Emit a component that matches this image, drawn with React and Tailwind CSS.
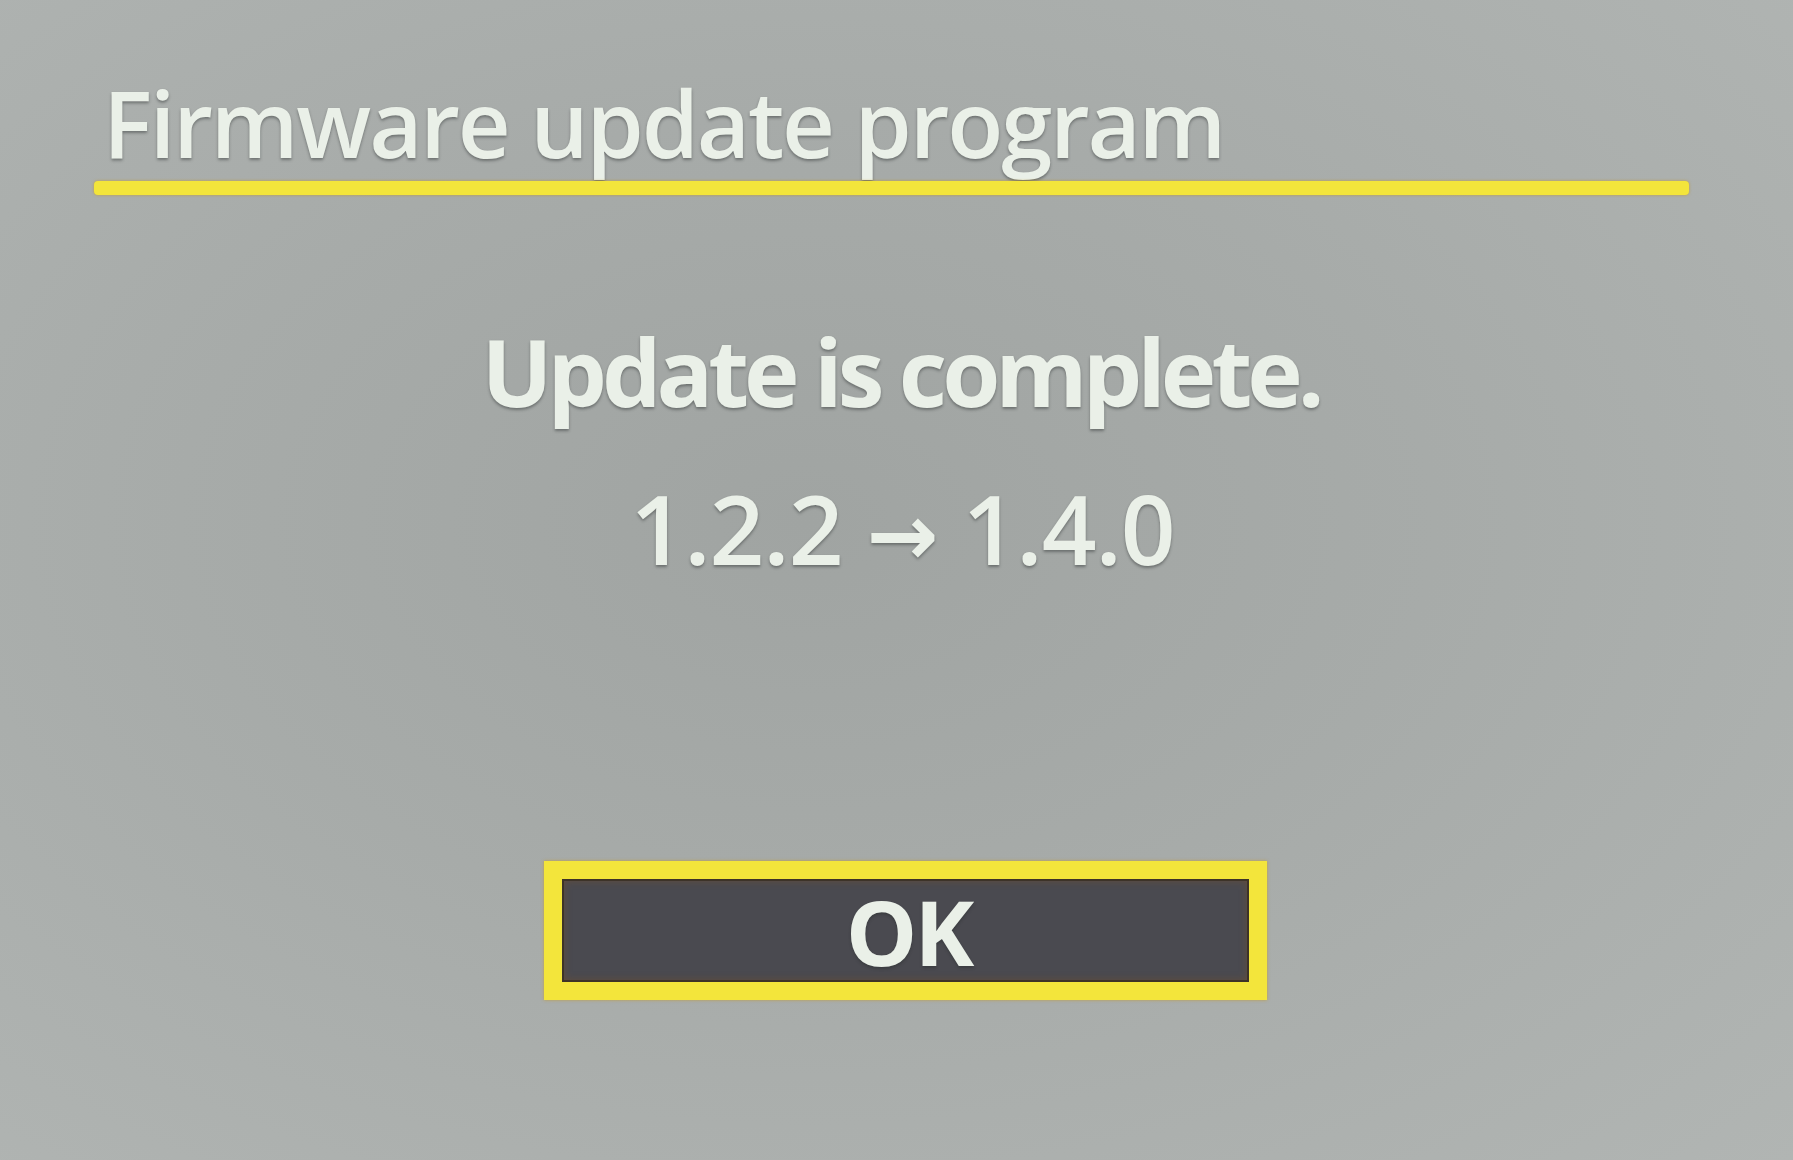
import React from 'react';

const glow = '[text-shadow:0_2px_3px_rgba(40,45,45,0.45)]';

const App = () => {
  return (
    <div className="w-full h-[1160px] overflow-hidden bg-[#a8acaa] bg-[radial-gradient(ellipse_at_45%_45%,#a0a4a2_0%,#a7aba9_45%,#b1b5b3_100%)] font-['Open_Sans',sans-serif] text-[#eaf0e8]">
      <div className="flex flex-col">
        <div className="pt-[77px] pl-[103px]">
          <h1 className={`text-[92px] leading-none font-semibold tracking-[-2.2px] ${glow}`}>
            Firmware update program
          </h1>
        </div>
        <div className="mt-[12px] ml-[94px] mr-[104px] h-[14px] rounded-[4px] bg-[#f3e53b] shadow-[0_0_3px_rgba(200,150,20,0.7)]"></div>

        <div className="mt-[129px] flex flex-col items-center">
          <p className={`ml-[8px] text-[94px] leading-none font-bold tracking-[-5px] ${glow}`}>Update is complete.</p>
          <p className={`mt-[62px] ml-[12px] text-[96px] leading-none font-semibold tracking-[-1px] ${glow}`}>
            1.2.2 <span className="font-['DejaVu_Sans',sans-serif] font-bold text-[86px] tracking-normal">→</span> 1.4.0
          </p>

          <button className="mt-[283px] ml-[18px] w-[723px] h-[139px] border-[18px] border-[#f3e53b] bg-[#4a4a50] shadow-[inset_0_0_0_2px_#3d3328,inset_0_0_10px_rgba(140,80,20,0.55),0_0_3px_rgba(200,150,20,0.7)] flex items-center justify-center">
            <span className={`ml-[6px] text-[90px] leading-none font-bold tracking-[-3px] ${glow}`}>OK</span>
          </button>
        </div>
      </div>
    </div>
  );
};

export default App;
